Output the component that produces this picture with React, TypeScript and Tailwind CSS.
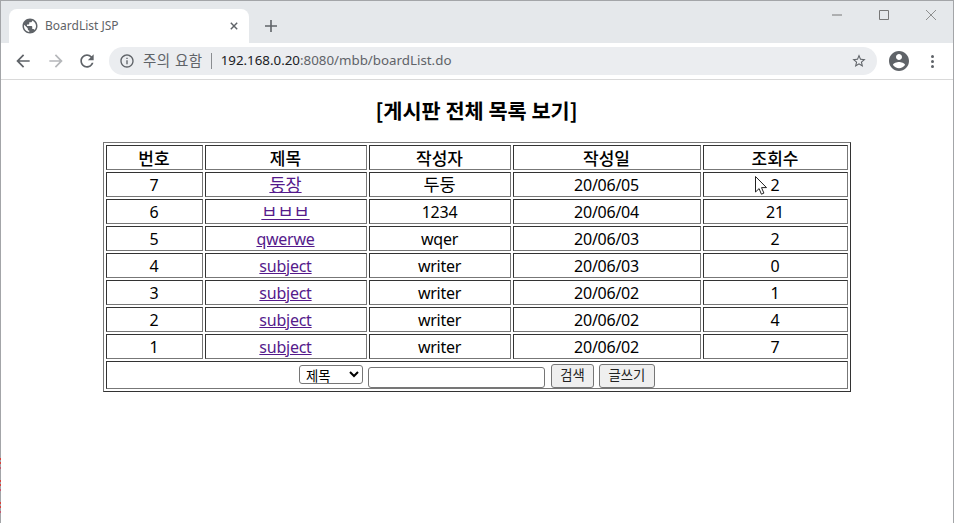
const rows = [
  { no: 7, title: "둥장", writer: "두둥", date: "20/06/05", hits: 2, koTitle: true, koWriter: true },
  { no: 6, title: "ㅂㅂㅂ", writer: "1234", date: "20/06/04", hits: 21, koTitle: true, koWriter: false },
  { no: 5, title: "qwerwe", writer: "wqer", date: "20/06/03", hits: 2, koTitle: false, koWriter: false },
  { no: 4, title: "subject", writer: "writer", date: "20/06/03", hits: 0, koTitle: false, koWriter: false },
  { no: 3, title: "subject", writer: "writer", date: "20/06/02", hits: 1, koTitle: false, koWriter: false },
  { no: 2, title: "subject", writer: "writer", date: "20/06/02", hits: 4, koTitle: false, koWriter: false },
  { no: 1, title: "subject", writer: "writer", date: "20/06/02", hits: 7, koTitle: false, koWriter: false },
];

const edge = "border border-t-[#333] border-l-[#333] border-r-[#777] border-b-[#777]";
const headCell = "h-[25px] p-0 text-center leading-[23px] text-[17px] font-medium font-['Noto_Sans_CJK_KR',sans-serif] " + edge;
const bodyCell = "h-[25px] p-0 pt-px text-center leading-[22px] tracking-[-0.25px] " + edge;

function Icon({ d, className }: { d: string; className: string }) {
  return (
    <svg viewBox="0 0 24 24" className={className} fill="currentColor">
      <path d={d} />
    </svg>
  );
}

function BrowserChrome() {
  return (
    <div className="font-['Noto_Sans','Noto_Sans_CJK_KR',sans-serif]">
      {/* tab strip */}
      <div className="h-[42px] bg-[#e5e8eb] flex items-end pl-2">
        <div className="w-[240px] h-[34px] bg-white rounded-t-lg flex items-center pl-[13px] pr-[11px]">
          <Icon
            className="w-[18px] h-[18px] text-[#5f6368] -ml-[1px]"
            d="M12 2C6.48 2 2 6.48 2 12s4.48 10 10 10 10-4.48 10-10S17.52 2 12 2zm-1 17.93c-3.95-.49-7-3.85-7-7.93 0-.62.08-1.21.21-1.79L9 15v1c0 1.1.9 2 2 2v1.93zm6.9-2.54c-.26-.81-1-1.39-1.9-1.39h-1v-3c0-.55-.45-1-1-1H8v-2h2c.55 0 1-.45 1-1V7h2c1.1 0 2-.9 2-2v-.41c2.93 1.19 5 4.06 5 7.41 0 2.08-.8 3.97-2.1 5.39z"
          />
          <span className="ml-[6px] text-[12px] text-[#5f6368] flex-1">BoardList JSP</span>
          <svg viewBox="0 0 10 10" className="w-[8px] h-[8px] text-[#5f6368]" stroke="currentColor" strokeWidth="1.8">
            <path d="M1 1l8 8M9 1l-8 8" />
          </svg>
        </div>
        <svg viewBox="0 0 12 12" className="w-[12px] h-[12px] ml-[16px] mb-[11px] text-[#5f6368]" stroke="currentColor" strokeWidth="1.6">
          <path d="M6 0v12M0 6h12" />
        </svg>
        <div className="ml-auto h-full flex items-start pt-[9px] pr-[17px] text-[#777]">
          <svg viewBox="0 0 10 10" className="w-[10px] h-[10px]" stroke="currentColor" fill="none">
            <path d="M0 5h10" />
          </svg>
          <svg viewBox="0 0 10 10" className="w-[10px] h-[10px] ml-[37px]" stroke="currentColor" fill="none">
            <path d="M.5.5h9v9h-9z" />
          </svg>
          <svg viewBox="0 0 10 10" className="w-[10px] h-[10px] ml-[37px]" stroke="currentColor" strokeWidth=".8" fill="none">
            <path d="M0 0l10 10M10 0L0 10" />
          </svg>
        </div>
      </div>
      {/* toolbar */}
      <div className="h-[37px] bg-white border-b border-[#d9d9d9] flex items-center">
        <Icon
          className="w-[20px] h-[20px] ml-[12px] text-[#5f6368]"
          d="M20 11H7.83l5.59-5.59L12 4l-8 8 8 8 1.41-1.41L7.83 13H20v-2z"
        />
        <Icon
          className="w-[20px] h-[20px] ml-[13px] text-[#b5b7ba] rotate-180"
          d="M20 11H7.83l5.59-5.59L12 4l-8 8 8 8 1.41-1.41L7.83 13H20v-2z"
        />
        <Icon
          className="w-[20px] h-[20px] ml-[11px] text-[#5f6368]"
          d="M17.65 6.35C16.2 4.9 14.21 4 12 4c-4.42 0-7.99 3.58-7.99 8s3.57 8 7.99 8c3.73 0 6.84-2.55 7.73-6h-2.08c-.82 2.33-3.04 4-5.65 4-3.31 0-6-2.69-6-6s2.69-6 6-6c1.66 0 3.14.69 4.22 1.78L13 11h7V4l-2.35 2.35z"
        />
        <div className="ml-[12px] w-[768px] h-[28px] rounded-full bg-[#ebedf0] flex items-center pl-[10px]">
          <Icon
            className="w-[16px] h-[16px] text-[#5f6368]"
            d="M11 7h2v2h-2zm0 4h2v6h-2zm1-9C6.48 2 2 6.48 2 12s4.48 10 10 10 10-4.48 10-10S17.52 2 12 2zm0 18c-4.41 0-8-3.59-8-8s3.59-8 8-8 8 3.59 8 8-3.59 8-8 8z"
          />
          <span className="ml-[8px] text-[14.5px] text-[#5f6368] tracking-[0.5px]">주의 요함</span>
          <span className="ml-[8px] w-px h-[16px] bg-[#8a8d91]" />
          <span className="ml-[9px] text-[13.33px] text-[#202124]">192.168.0.20</span>
          <span className="text-[13.33px] text-[#5f6368]">:8080/mbb/boardList.do</span>
          <Icon
            className="w-[16px] h-[16px] ml-auto mr-[10px] text-[#5f6368]"
            d="M22 9.24l-7.19-.62L12 2 9.19 8.63 2 9.24l5.46 4.73L5.82 21 12 17.27 18.18 21l-1.63-7.03L22 9.24zM12 15.4l-3.76 2.27 1-4.28-3.32-2.88 4.38-.38L12 6.1l1.71 4.04 4.38.38-3.32 2.88 1 4.28L12 15.4z"
          />
        </div>
        <Icon
          className="w-[24px] h-[24px] ml-[10px] text-[#5f6368]"
          d="M12 2C6.48 2 2 6.48 2 12s4.48 10 10 10 10-4.48 10-10S17.52 2 12 2zm0 3c1.66 0 3 1.34 3 3s-1.34 3-3 3-3-1.34-3-3 1.34-3 3-3zm0 14.2c-2.5 0-4.71-1.28-6-3.22.03-1.99 4-3.08 6-3.08 1.99 0 5.97 1.09 6 3.08-1.29 1.94-3.5 3.22-6 3.22z"
        />
        <div className="ml-[20px] flex flex-col gap-[2px]">
          <span className="w-[3px] h-[3px] rounded-full bg-[#5f6368]" />
          <span className="w-[3px] h-[3px] rounded-full bg-[#5f6368]" />
          <span className="w-[3px] h-[3px] rounded-full bg-[#5f6368]" />
        </div>
      </div>
    </div>
  );
}

export default function App() {
  return (
    <div className="relative w-[954px] h-[523px] bg-white border-t border-x border-[#a3a5a8] text-black font-['Noto_Sans','Noto_Sans_CJK_KR',sans-serif]">
      <BrowserChrome />

      {/* Board */}
      <div className="flex flex-col items-center -ml-px">
        <h2 className="mt-[17px] h-[26px] text-[20.8px] leading-[26px] font-bold font-['Noto_Sans_CJK_KR','Noto_Sans',sans-serif]">
          [게시판 전체 목록 보기]
        </h2>
        <table className="mt-[19px] table-fixed w-[748px] border-separate border-spacing-[2px] border border-t-[#777] border-l-[#777] border-r-[#333] border-b-[#333] text-[16px]">
          <colgroup>
            <col className="w-[97px]" />
            <col className="w-[162px]" />
            <col className="w-[142px]" />
            <col className="w-[188px]" />
            <col className="w-[145px]" />
          </colgroup>
          <thead>
            <tr>
              {["번호", "제목", "작성자", "작성일", "조회수"].map((h) => (
                <th key={h} className={headCell}>
                  {h}
                </th>
              ))}
            </tr>
          </thead>
          <tbody>
            {rows.map((r) => (
              <tr key={r.no}>
                <td className={bodyCell}>{r.no}</td>
                <td className={bodyCell}>
                  <a href="#" className={r.koTitle ? "text-[#551a8b] underline text-[17.5px] leading-none tracking-normal" : "text-[#551a8b] underline"}>
                    {r.title}
                  </a>
                </td>
                <td className={bodyCell}>
                  <span className={r.koWriter ? "text-[17.5px] leading-none tracking-normal" : ""}>{r.writer}</span>
                </td>
                <td className={bodyCell}>{r.date}</td>
                <td className={bodyCell}>{r.hits}</td>
              </tr>
            ))}
            <tr>
              <td colSpan={5} className={"h-[28px] p-0 " + edge}>
                <form className="flex justify-center items-start gap-[5px] text-[13.33px] pl-px">
                  <select className="mt-[2px] w-[64px] h-[19px] border border-[#767676] rounded-[3px] bg-white text-[13.33px] leading-none pl-[2px]">
                    <option>제목</option>
                  </select>
                  <input type="text" className="mt-[4px] w-[177px] h-[21px] border border-[#767676] rounded-[3px] bg-white" />
                  <button type="button" className="ml-px mt-px w-[43px] h-[24px] border border-[#767676] rounded-[3px] bg-[#efefef] text-[13.33px] leading-none text-[#222]">
                    검색
                  </button>
                  <button type="button" className="mt-px w-[56px] h-[24px] border border-[#767676] rounded-[3px] bg-[#efefef] text-[13.33px] leading-none text-[#222]">
                    글쓰기
                  </button>
                </form>
              </td>
            </tr>
          </tbody>
        </table>
      </div>

      {/* mouse pointer */}
      <svg viewBox="0 0 12 19" className="absolute left-[754px] top-[175px] w-[12px] h-[19px]" fill="white" stroke="#222" strokeWidth="1">
        <path d="M.5.5v15.5l3.6-3.4 2.3 5.6 2.5-1.1-2.4-5.5h5z" />
      </svg>

      {/* capture noise on the left window edge */}
      <span className="absolute -left-px top-[457px] w-px h-[2px] bg-[#d9403a]" />
      <span className="absolute -left-px top-[461px] w-px h-[2px] bg-[#d9403a]" />
      <span className="absolute -left-px top-[466px] w-px h-[2px] bg-[#c25a70]" />
      <span className="absolute -left-px top-[479px] w-px h-[2px] bg-[#d9403a]" />
      <span className="absolute -left-px top-[483px] w-px h-[2px] bg-[#d9403a]" />
      <span className="absolute -left-px top-[488px] w-px h-[2px] bg-[#c25a70]" />
      <span className="absolute -left-px top-[501px] w-px h-[2px] bg-[#d9403a]" />
      <span className="absolute -left-px top-[505px] w-px h-[2px] bg-[#d9403a]" />
      <span className="absolute -left-px top-[510px] w-px h-[2px] bg-[#c25a70]" />
    </div>
  );
}
